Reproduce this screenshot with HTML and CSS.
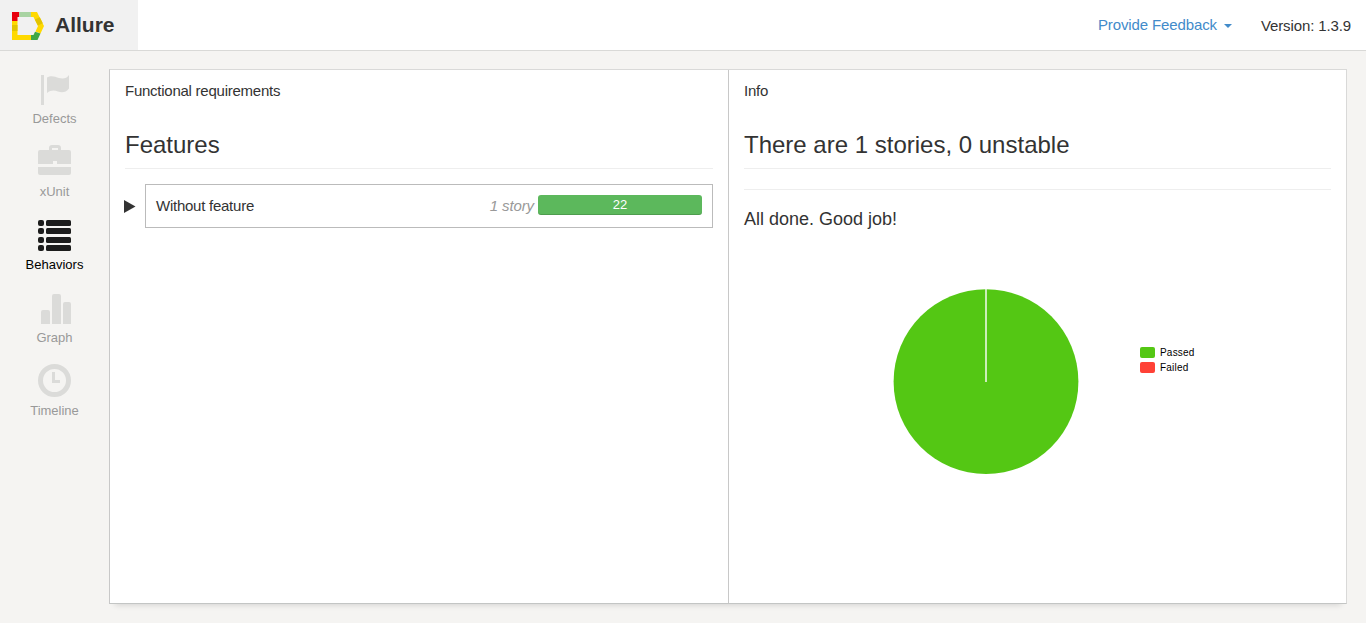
FILE: index.html
```html
<!DOCTYPE html>
<html lang="en">
<head>
<meta charset="utf-8">
<title>Allure</title>
<link rel="stylesheet" href="styles.css">
</head>
<body>
<header class="topbar">
  <a class="brand">
    <svg class="logo" width="32" height="28" viewBox="0 0 32 28">
      <path fill="#ffd900" d="M0 9h5.5v14H19v5H0z"/>
      <path fill="#e2c400" d="M0 13h5.5v6H0z"/>
      <path fill="#e8000d" d="M0 0h7.3v5H5.5v4H0z"/>
      <path fill="#a8d3a2" d="M7.3 0H19v5H7.3z"/>
      <path fill="#ffd900" d="M19 0h6l7 14-3.5 7.5-5-2L26 14l-4.5-9H19z"/>
      <path fill="#e2c400" d="M22.8 7.5l5-2.3 3 6-5 2.3z"/>
      <path fill="#3fa845" d="M23 19.8l5.5 1.7L25.500 28H19v-5h2.500z"/>
    </svg>
    <span>Allure</span>
  </a>
  <div class="top-right">
    <a class="feedback">Provide Feedback<i class="caret"></i></a>
    <span class="version">Version: 1.3.9</span>
  </div>
</header>
<div class="page">
  <nav class="sidebar">
    <a class="nav-item">
      <svg class="icon" width="34" height="34" viewBox="0 0 34 34">
        <path d="M4 3h3v30H4z"/>
        <path d="M10 5.500C14 3 18 4.500 22 6c4 1 8 .5 10-3v13.500c-3 4-7 4.500-11 3-4-1.500-7-1.500-11 1.500z"/>
      </svg>
      <span>Defects</span>
    </a>
    <a class="nav-item">
      <svg class="icon" width="34" height="34" viewBox="0 0 34 34">
        <path fill-rule="evenodd" d="M12 3q0-3 3-3h6q3 0 3 3v2h8q2 0 2 2v12H20v-3h-4v3H1V7q0-2 2-2h9zm3 0v2h6V3z"/>
        <path d="M1 22h33v6q0 2-2 2H3q-2 0-2-2z"/>
      </svg>
      <span>xUnit</span>
    </a>
    <a class="nav-item active">
      <svg class="icon" width="34" height="34" viewBox="0 0 34 34">
        <rect x="1" y="2" width="6" height="6" rx="2"/><rect x="9" y="2" width="25" height="6" rx="1.5"/>
        <rect x="1" y="10" width="6" height="6" rx="2"/><rect x="9" y="10" width="25" height="6" rx="1.5"/>
        <rect x="1" y="19" width="6" height="6" rx="2"/><rect x="9" y="19" width="25" height="6" rx="1.5"/>
        <rect x="1" y="27" width="6" height="6" rx="2"/><rect x="9" y="27" width="25" height="6" rx="1.5"/>
      </svg>
      <span>Behaviors</span>
    </a>
    <a class="nav-item">
      <svg class="icon" width="34" height="34" viewBox="0 0 34 34">
        <path d="M4 33V21q0-2 2-2h5q2 0 2 2v12zM15 33V5q0-2 2-2h5q2 0 2 2v28zM26 33V13q0-2 2-2h4q2 0 2 2v20z"/>
      </svg>
      <span>Graph</span>
    </a>
    <a class="nav-item">
      <svg class="icon" width="34" height="34" viewBox="0 0 34 34">
        <circle class="clock-ring" cx="17.5" cy="16.5" r="14"/>
        <path d="M15 8h3v8h5v3h-8z"/>
      </svg>
      <span>Timeline</span>
    </a>
  </nav>
  <main class="panes">
    <section class="pane">
      <div class="pane-title">Functional requirements</div>
      <h3>Features</h3>
      <div class="feature-row">
        <svg class="arrow" width="12" height="13" viewBox="0 0 12 13"><path d="M0 0l11.5 6.5L0 13z"/></svg>
        <div class="feature">
          <span class="feature-name">Without feature</span>
          <em>1 story</em>
          <div class="bar">22</div>
        </div>
      </div>
    </section>
    <section class="pane info">
      <div class="pane-title">Info</div>
      <h3>There are 1 stories, 0 unstable</h3>
      <hr>
      <h4>All done. Good job!</h4>
      <div class="chart">
        <svg class="pie" width="186" height="186" viewBox="0 0 186 186">
          <circle cx="93" cy="92.6" r="92.4"/>
          <path d="M93 0v93"/>
        </svg>
        <ul class="legend">
          <li><i class="swatch passed"></i>Passed</li>
          <li><i class="swatch failed"></i>Failed</li>
        </ul>
      </div>
    </section>
  </main>
</div>
</body>
</html>
```
FILE: styles.css
```css
* { box-sizing: border-box; }
body {
  margin: 0;
  height: 623px;
  overflow: hidden;
  background: #f5f4f2;
  color: #333;
  font: 15px/21px "Liberation Sans", Arial, sans-serif;
}
.topbar {
  display: flex;
  justify-content: space-between;
  height: 51px;
  background: #fff;
  border-bottom: 1px solid #d9d9d7;
}
.brand {
  display: flex;
  width: 138px;
  padding: 12px 0 0 12px;
  background: #f1f1f1;
  font-size: 21px;
  font-weight: bold;
  line-height: 26px;
}
.logo { margin-right: 11px; }
.top-right { display: flex; padding: 15px 15px 0 0; letter-spacing: -.12px; }
.feedback { color: #428bca; margin-right: 29px; line-height: 20px; }
.caret {
  display: inline-block;
  margin-left: 7px;
  vertical-align: middle;
  border: 4px solid transparent;
  border-top-color: #428bca;
  border-bottom: 0;
}
.version { line-height: 22px; }
.page { display: flex; }
.sidebar { width: 109px; padding-top: 21px; }
.nav-item {
  display: flex;
  flex-direction: column;
  align-items: center;
  height: 73px;
  color: #999;
  font-size: 13px;
  line-height: 18px;
}
.nav-item span { margin-top: 4px; }
.icon { margin-right: 1px; fill: #dbdbd9; }
.clock-ring { fill: none; stroke: #dbdbd9; stroke-width: 5; }
.active { color: #000; }
.active .icon { fill: #1c1c1c; }
.panes {
  display: flex;
  width: 1238px;
  height: 535px;
  margin-top: 18px;
  background: #fff;
  border: 1px solid #d9d9d8;
  border-left-color: #c8c8c8;
  border-bottom-color: #c3c5c4;
  box-shadow: 0 7px 6px -6px rgba(0, 0, 0, .14);
}
.pane { width: 618px; padding: 10px 15px; }
.info { flex: 1; border-left: 1px solid #c8c8c8; }
h3 {
  height: 48px;
  margin: 20px 0 0;
  padding-top: 9px;
  border-bottom: 1px solid #eee;
  font-size: 24px;
  font-weight: normal;
  line-height: 30px;
}
.pane-title { height: 21px; letter-spacing: -.25px; }
.feature-row { display: flex; align-items: center; margin-top: 15px; }
.arrow { width: 12px; margin: 0 9px 0 -1px; fill: #333; }
.feature {
  display: flex;
  flex: 1;
  height: 44px;
  padding: 10px;
  border: 1px solid #bbb;
}
.feature-name { flex: 1; letter-spacing: -.25px; }
.feature em { color: #999; margin-right: 4px; letter-spacing: -.1px; }
.bar {
  width: 164px;
  height: 20px;
  border-radius: 3px;
  background: #5cb85c;
  box-shadow: inset 0 -1px 0 rgba(0, 0, 0, .15);
  color: #fff;
  font-size: 13px;
  line-height: 20px;
  text-align: center;
}
hr { margin: 20px 0 0; border: 0; border-top: 1px solid #eee; }
h4 { margin: 18px 0 0; font-size: 18px; font-weight: normal; line-height: 22px; }
.chart { display: flex; margin: 59px 0 0 149px; }
.pie { fill: #54c714; stroke: none; }
.pie path { stroke: #fff; stroke-width: 1.4; }
.legend {
  margin: 56px 0 0 61px;
  padding: 0;
  list-style: none;
  color: #000;
  font-size: 10px;
  letter-spacing: .2px;
  line-height: 15px;
}
.legend li { display: flex; align-items: center; }
.swatch { width: 15px; height: 11px; margin-right: 5px; border-radius: 2px; }
.passed { background: #54c714; }
.failed { background: #ff4136; }
```
